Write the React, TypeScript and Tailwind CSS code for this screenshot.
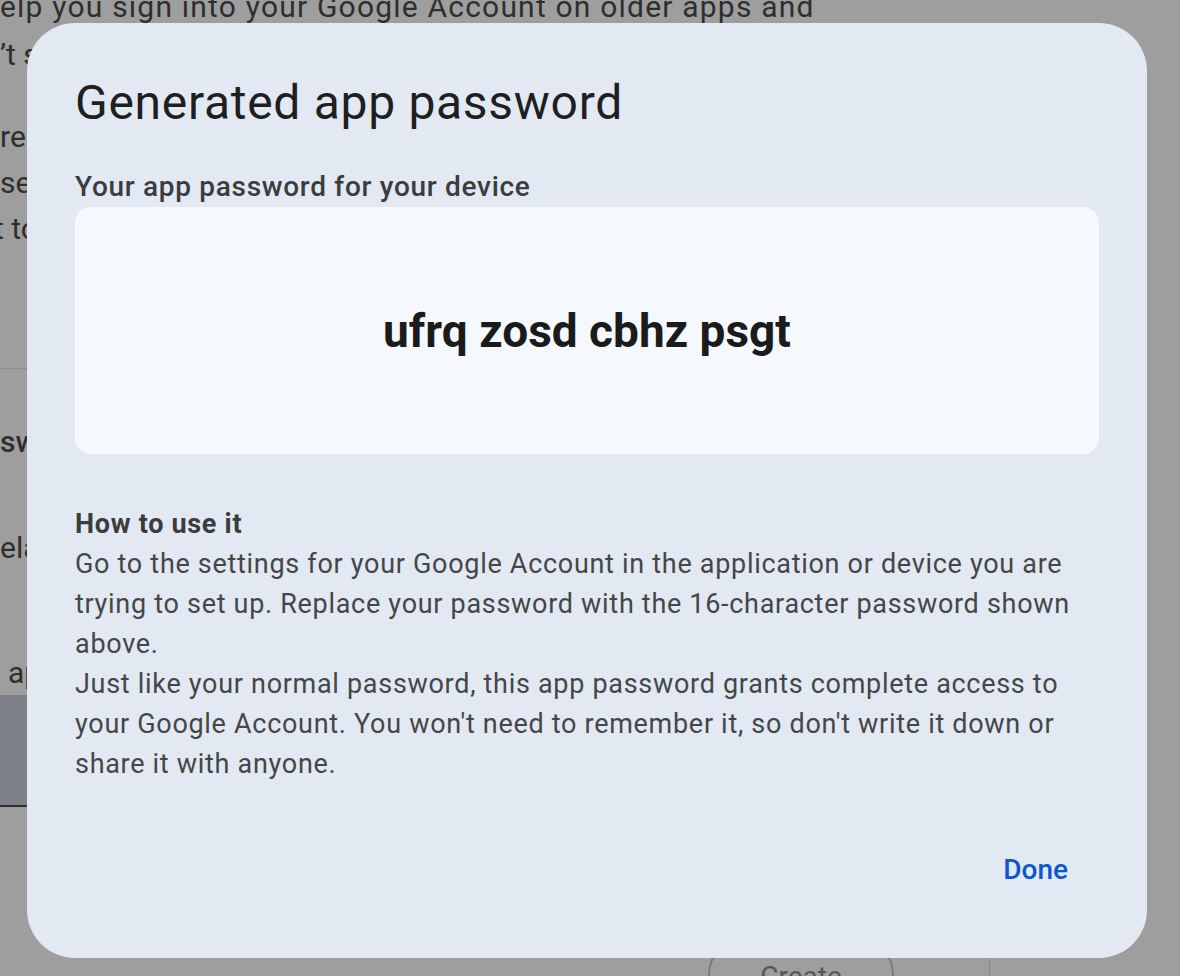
import React from 'react';

const sans = "font-['Roboto','Liberation_Sans',sans-serif]";

const Backdrop: React.FC = () => (
  <div className={`flex flex-col text-[30px] text-[#2e2e2e] ${sans}`}>
    {/* intro paragraph, mostly hidden behind the dialog */}
    <div className="mt-[-17px] leading-[48px] whitespace-nowrap">
      <p className="tracking-[1.2px]">elp you sign into your Google Account on older apps and</p>
      <p>’t support modern security standards.</p>
    </div>
    <div className="mt-[35px] leading-[46px] whitespace-nowrap">
      <p>re less secure than using up-to-date apps and services.</p>
      <p>se them only when the app doesn’t offer a way</p>
      <p className="-ml-[6px]">t to your account.</p>
    </div>
    <div className="mt-[116px] h-px w-[1100px] bg-[#8b8b8b]" />
    <p className="mt-[50px] leading-[46px] font-medium whitespace-nowrap">swords</p>
    <p className="mt-[60px] leading-[46px] whitespace-nowrap">elated to</p>
    <p className="mt-[79px] ml-[8px] leading-[46px] whitespace-nowrap">app name</p>
    <div className="mt-[-1px] h-[112px] w-[1100px] border-b-2 border-[#2f3033] bg-[#7e8187]" />
    <div className="mt-[128px] flex items-start">
      <div className="ml-[708px] flex h-[80px] w-[186px] justify-center rounded-full border-2 border-[#7a7a7a] pt-[22px] text-[28px] leading-[36px] text-[#575757]">
        Create
      </div>
      <div className="ml-[95px] h-[100px] w-px bg-[#8a8a8a]" />
    </div>
  </div>
);

const PasswordDialog: React.FC = () => (
  <div
    className={`absolute left-[27px] top-[23px] flex h-[935px] w-[1120px] flex-col rounded-[48px] bg-[#e2e9f3] px-[48px] pt-[52px] ${sans}`}
  >
    <h1 className="text-[48px] leading-[56px] font-normal tracking-[0.7px] text-[#1f1f1f]">Generated app password</h1>

    <h2 className="mt-[38px] text-[28px] leading-[36px] font-medium tracking-[0.7px] text-[#3c3c3c]">
      Your app password for your device
    </h2>

    <div className="mt-[2px] flex h-[247px] items-center justify-center rounded-[16px] bg-[#f5f8fd]">
      <span className="text-[46px] leading-[56px] font-bold text-[#1b1b1b]">ufrq zosd cbhz psgt</span>
    </div>

    <div className="mt-[50px] text-[27px] leading-[40px] tracking-[0.7px] text-[#444746]">
      <p className="font-bold text-[#3c3c3c]">How to use it</p>
      <p>
        Go to the settings for your Google Account in the application or device you are
        <br />
        trying to set up. Replace your password with the 16-character password shown
        <br />
        above.
      </p>
      <p>
        Just like your normal password, this app password grants complete access to
        <br />
        your Google Account. You won't need to remember it, so don't write it down or
        <br />
        share it with anyone.
      </p>
    </div>

    <div className="mt-[66px] flex justify-end">
      <button className="mr-[31px] text-[28px] leading-[40px] font-medium text-[#0b57d0]">Done</button>
    </div>
  </div>
);

export default function App() {
  return (
    <div className="relative h-[976px] w-[1180px] overflow-hidden bg-[#9e9e9e]">
      <Backdrop />
      <PasswordDialog />
    </div>
  );
}
